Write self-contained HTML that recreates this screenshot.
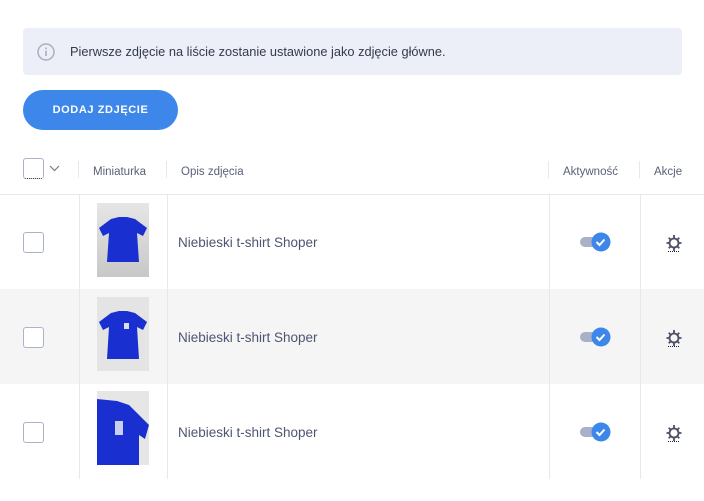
<!DOCTYPE html>
<html><head><meta charset="utf-8"><style>
*{margin:0;padding:0;box-sizing:border-box}
body{width:704px;height:501px;background:#fff;font-family:"Liberation Sans",sans-serif;position:relative;overflow:hidden;color:#4a5068}
.a{position:absolute}
.info{left:23px;top:28px;width:659px;height:47px;background:#eceff8;border-radius:4px}
.info span{position:absolute;left:47px;top:16px;font-size:12.8px;color:#333a4a}
.btn{left:23px;top:90px;width:155px;height:40px;background:#3d86ea;border-radius:20px;color:#fff;font-weight:bold;font-size:11px;letter-spacing:0.6px;text-align:center;line-height:40px}
.cb{width:21px;height:21px;border:1px solid #aab3c9;border-radius:3px;background:#fff}
.h{font-size:11.5px;color:#5a6078;top:166px}
.vl{width:1px;background:#e8e8ea}
.hl{height:1px;background:#e8e8ea;left:0;width:704px}
.txt{font-size:13.5px;color:#4f5570;left:178px}
.th{left:97px;width:52px;height:74px;background:#dcdcdc}
</style></head><body>
<div class="a info"><svg class="a" style="left:14px;top:15px" width="18" height="18" viewBox="0 0 18 18"><circle cx="9" cy="9" r="8" fill="none" stroke="#a9aec0" stroke-width="1.5"/><rect x="8.2" y="7.5" width="1.6" height="5.5" fill="#a9aec0"/><rect x="8.2" y="4.5" width="1.6" height="1.6" fill="#a9aec0"/></svg><span>Pierwsze zdjęcie na liście zostanie ustawione jako zdjęcie główne.</span></div>
<div class="a btn">DODAJ ZDJĘCIE</div>

<div class="a cb" style="left:23px;top:158px;border-bottom:1px dotted #222"></div>
<svg class="a" style="left:49px;top:165px" width="11" height="7" viewBox="0 0 11 7"><path d="M1 1l4.5 4.5L10 1" fill="none" stroke="#778" stroke-width="1.2"/></svg>
<div class="a vl" style="left:78px;top:161px;height:17px"></div>
<div class="a vl" style="left:166px;top:161px;height:17px"></div>
<div class="a vl" style="left:548px;top:161px;height:17px"></div>
<div class="a vl" style="left:639px;top:161px;height:17px"></div>
<div class="a h" style="left:93px">Miniaturka</div>
<div class="a h" style="left:181px">Opis zdjęcia</div>
<div class="a h" style="left:563px">Aktywność</div>
<div class="a h" style="left:654px">Akcje</div>
<div class="a hl" style="top:194px"></div>
<div class="a" style="left:0;top:289px;width:704px;height:95px;background:#f5f5f5"></div>
<div class="a vl" style="left:79px;top:195px;height:284px"></div>
<div class="a vl" style="left:167px;top:195px;height:284px"></div>
<div class="a vl" style="left:549px;top:195px;height:284px"></div>
<div class="a vl" style="left:640px;top:195px;height:284px"></div>

<div class="a cb" style="left:23px;top:232px"></div>
<div class="a cb" style="left:23px;top:327px"></div>
<div class="a cb" style="left:23px;top:422px"></div>

<div class="a th" style="top:203px;background:linear-gradient(#e6e6e6,#c8c8c8)"><svg width="52" height="74" viewBox="0 0 52 74"><path d="M14 16l8-2h8l8 2 12 9-4 8-6-3 2 29H10l2-29-6 3-4-8z" fill="#1a2fd0"/></svg></div>
<div class="a th" style="top:297px;background:#e4e4e4"><svg width="52" height="74" viewBox="0 0 52 74"><path d="M14 16l8-2h8l8 2 12 9-4 8-6-3 2 32H10l2-32-6 3-4-8z" fill="#1a2fd0"/><rect x="27" y="26" width="5" height="6" fill="#dde"/></svg></div>
<div class="a th" style="top:391px;background:#e6e6e6"><svg width="52" height="74" viewBox="0 0 52 74"><path d="M0 8l20 2 12 4 20 20-4 14-6-4v34H0z" fill="#1a2fd0"/><rect x="18" y="30" width="8" height="14" fill="#c8cff0"/></svg></div>

<div class="a txt" style="top:235px">Niebieski t-shirt Shoper</div>
<div class="a txt" style="top:330px">Niebieski t-shirt Shoper</div>
<div class="a txt" style="top:425px">Niebieski t-shirt Shoper</div>

<svg class="a" style="left:579px;top:232px" width="32" height="20" viewBox="0 0 32 20"><rect x="1" y="5" width="22" height="10" rx="5" fill="#a9b1c8"/><circle cx="22" cy="10" r="9.5" fill="#3d86ea"/><path d="M17.5 10l3 3 5-5.5" fill="none" stroke="#fff" stroke-width="2"/></svg>
<svg class="a" style="left:579px;top:327px" width="32" height="20" viewBox="0 0 32 20"><rect x="1" y="5" width="22" height="10" rx="5" fill="#a9b1c8"/><circle cx="22" cy="10" r="9.5" fill="#3d86ea"/><path d="M17.5 10l3 3 5-5.5" fill="none" stroke="#fff" stroke-width="2"/></svg>
<svg class="a" style="left:579px;top:422px" width="32" height="20" viewBox="0 0 32 20"><rect x="1" y="5" width="22" height="10" rx="5" fill="#a9b1c8"/><circle cx="22" cy="10" r="9.5" fill="#3d86ea"/><path d="M17.5 10l3 3 5-5.5" fill="none" stroke="#fff" stroke-width="2"/></svg>

<svg class="a" style="left:665px;top:234px" width="18" height="18" viewBox="0 0 18 18"><g stroke="#4a4f66" stroke-width="1.8"><path d="M9 1v3M9 14v3M1.5 9h3M13.5 9h3M3.7 3.7l2 2M12.3 12.3l2 2M3.7 14.3l2-2M12.3 5.7l2-2"/><circle cx="9" cy="9" r="4.5" fill="none"/></g><path d="M3 17.5h12" stroke="#222" stroke-dasharray="1 1"/></svg>
<svg class="a" style="left:665px;top:329px" width="18" height="18" viewBox="0 0 18 18"><g stroke="#4a4f66" stroke-width="1.8"><path d="M9 1v3M9 14v3M1.5 9h3M13.5 9h3M3.7 3.7l2 2M12.3 12.3l2 2M3.7 14.3l2-2M12.3 5.7l2-2"/><circle cx="9" cy="9" r="4.5" fill="none"/></g><path d="M3 17.5h12" stroke="#222" stroke-dasharray="1 1"/></svg>
<svg class="a" style="left:665px;top:424px" width="18" height="18" viewBox="0 0 18 18"><g stroke="#4a4f66" stroke-width="1.8"><path d="M9 1v3M9 14v3M1.5 9h3M13.5 9h3M3.7 3.7l2 2M12.3 12.3l2 2M3.7 14.3l2-2M12.3 5.7l2-2"/><circle cx="9" cy="9" r="4.5" fill="none"/></g><path d="M3 17.5h12" stroke="#222" stroke-dasharray="1 1"/></svg>
</body></html>
